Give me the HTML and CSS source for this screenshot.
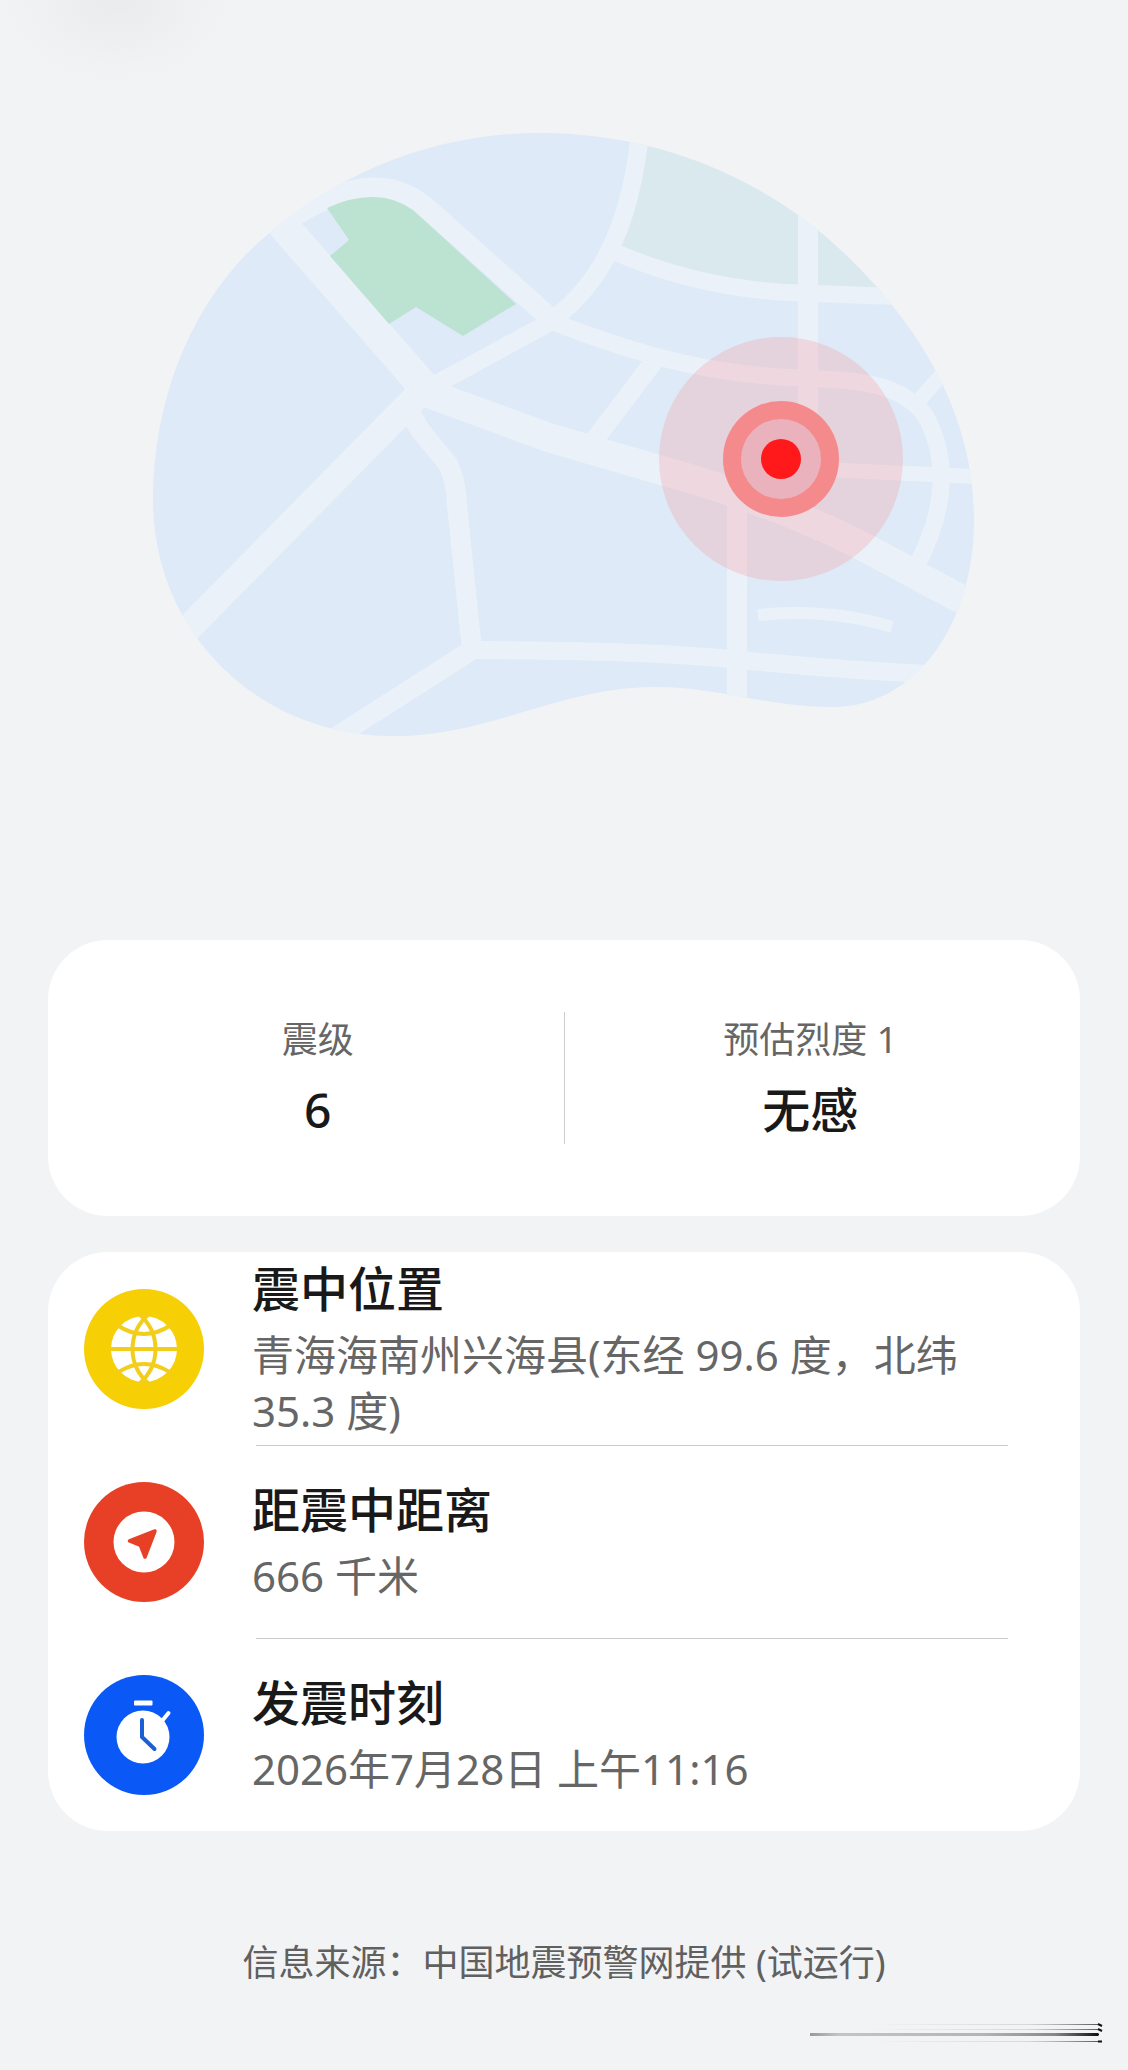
FILE: index.html
```html
<!DOCTYPE html>
<html lang="zh-CN">
<head>
  <meta charset="UTF-8" />
  <meta name="viewport" content="width=device-width, initial-scale=1" />
  <title>地震预警</title>
  <link rel="stylesheet" href="styles.css">
</head>
<body>
  <main class="page">
    <svg class="map" viewBox="153 133 822 603" role="img" aria-label="震中地图">
      <defs>
        <clipPath id="land">
          <path d="M153 500C153 395 195 295 267 235C340 172 435 133 540 133C660 133 770 180 850 259C930 337 974 425 974 520C974 625 915 707 833 707C765 707 720 687 655 687C560 687 490 736 395 736C255 736 153 630 153 500Z" />
        </clipPath>
      </defs>
      <g clip-path="url(#land)">
        <rect x="153" y="133" width="822" height="603" fill="#deeaf7" />
        <path d="M642 120Q640 195 615 250Q700 290 800 293L910 297V120Z" fill="#dae9ee" />
        <!-- roads -->
        <g fill="none" stroke="#eaf1f9">
          <path d="M240 176L425 388" stroke-width="31" />
          <path d="M416 389L550 438L660 470Q770 500 860 545L985 612" stroke-width="29" />
          <path d="M430 383L165 652" stroke-width="27" />
          <path d="M404 402L420 430L448 464Q456 480 457 505L472 650L325 744" stroke-width="20" />
          <path d="M466 650Q650 650 740 660Q850 671 950 675" stroke-width="18" />
          <path d="M737 480V710" stroke-width="20" />
          <path d="M285 222Q335 188 375 188Q405 188 430 211L550 318" stroke-width="21" />
          <path d="M420 393L545 325C590 295 632 240 641 120" stroke-width="18" />
          <path d="M610 250Q700 290 800 293L910 297" stroke-width="17" />
          <path d="M548 320C650 360 720 375 800 378C860 380 900 383 925 415C950 460 945 510 918 563" stroke-width="17" />
          <path d="M915 405L952 363" stroke-width="15" />
          <path d="M790 468L985 477" stroke-width="15" />
          <path d="M808 200V470" stroke-width="20" />
          <path d="M655 360L592 443" stroke-width="19" />
          <path d="M758 615Q830 608 892 627" stroke-width="12" />
        </g>
        <path d="M327 208Q350 197 373 197Q395 197 413 210L516 304L463 336L416 307L389 324L330 256L349 240Z" fill="#bce2d2" />
      </g>
      <!-- epicenter -->
      <circle cx="781" cy="459" r="122" fill="rgba(255,115,117,0.2)" />
      <circle cx="781" cy="459" r="58" fill="#f58a8d" />
      <circle cx="781" cy="459" r="40" fill="#eab2bd" />
      <circle cx="781" cy="459" r="20" fill="#ff191b" />
    </svg>

    <section class="card summary">
      <div class="stat">
        <span class="stat-label">震级</span>
        <strong class="stat-value">6</strong>
      </div>
      <div class="stat">
        <span class="stat-label">预估烈度 1</span>
        <strong class="stat-value">无感</strong>
      </div>
    </section>

    <section class="card details">
      <div class="row">
        <svg class="icon" viewBox="0 0 120 120" aria-hidden="true">
          <circle cx="60" cy="60" r="60" fill="#f6cf05" />
          <circle cx="60" cy="60" r="33" fill="#fff" />
          <g fill="none" stroke="#f3cd1c" stroke-width="4">
            <path d="M26 60H94" />
            <path d="M65 25C43 44 43 76 65 95" />
            <path d="M55 25C77 44 77 76 55 95" />
            <path d="M33 36Q60 54 87 36" />
            <path d="M33 84Q60 66 87 84" />
          </g>
        </svg>
        <div class="info">
          <h2>震中位置</h2>
          <p>青海海南州兴海县(东经 99.6 度，北纬 35.3 度)</p>
        </div>
      </div>
      <div class="row">
        <svg class="icon" viewBox="0 0 120 120" aria-hidden="true">
          <circle cx="60" cy="60" r="60" fill="#e84026" />
          <circle cx="60" cy="60" r="30.5" fill="#fff" />
          <path d="M71 49L45.500 59L56.500 63.500L61 75Z" fill="#e84026" stroke="#e84026" stroke-width="3.500" stroke-linejoin="round" />
        </svg>
        <div class="info">
          <h2>距震中距离</h2>
          <p>666 千米</p>
        </div>
      </div>
      <div class="row">
        <svg class="icon" viewBox="0 0 120 120" aria-hidden="true">
          <circle cx="60" cy="60" r="60" fill="#0a59f7" />
          <circle cx="59" cy="62" r="26.5" fill="#fff" />
          <rect x="50" y="25.5" width="18.500" height="5" rx="1" fill="#fff" />
          <path d="M78 46L84.500 38" fill="none" stroke="#fff" stroke-width="4" stroke-linecap="round" />
          <path d="M58 45V62L70.500 74" fill="none" stroke="#1a5fd6" stroke-width="4" stroke-linecap="round" stroke-linejoin="round" />
        </svg>
        <div class="info">
          <h2>发震时刻</h2>
          <p>2026年7月28日 上午11:16</p>
        </div>
      </div>
    </section>

    <footer class="source">
      <p>信息来源：中国地震预警网提供 (试运行)</p>
      <svg class="streaks" viewBox="0 0 294 30" aria-hidden="true">
        <defs>
          <linearGradient id="main-streak">
            <stop offset="0" stop-color="#999" />
            <stop offset="0.1" stop-color="#c4c4c4" />
            <stop offset="0.6" stop-color="#b4b4b4" />
            <stop offset="0.85" stop-color="#888" />
            <stop offset="1" stop-color="#111" />
          </linearGradient>
          <linearGradient id="thin-streak">
            <stop offset="0.2" stop-color="#999" stop-opacity="0" />
            <stop offset="0.75" stop-color="#999" stop-opacity="0.3" />
            <stop offset="1" stop-color="#555" />
          </linearGradient>
        </defs>
        <rect x="0" y="12" width="288" height="3" fill="url(#main-streak)" />
        <rect x="0" y="3" width="290" height="1" fill="url(#thin-streak)" />
        <rect x="0" y="8" width="290" height="1" fill="url(#thin-streak)" />
        <rect x="0" y="20" width="290" height="1" fill="url(#thin-streak)" />
        <path d="M288 3L292 5M288 8L292 10M287 13.500H289M288 20.500H292" stroke="#111" stroke-width="2" />
      </svg>
    </footer>
  </main>
</body>
</html>
```
FILE: styles.css
```css
* {
  box-sizing: border-box;
}
body {
  margin: 0;
  font-family: "Noto Sans", "Noto Sans CJK SC", sans-serif;
  background: radial-gradient(ellipse 110px 80px at 116px 0, #eaebed, #f2f3f5) no-repeat #f2f3f5;
  color: #191919;
}
h2, p {
  margin: 0;
}
.page {
  display: flex;
  flex-direction: column;
  padding: 133px 48px 20px;
}
.map {
  display: block;
  width: 80%;
  max-width: 822px;
  margin: 0 auto 204px;
}
.card {
  background: #fff;
  border-radius: 60px;
}
.summary {
  display: flex;
  padding: 72px 24px;
  margin-bottom: 36px;
}
.stat {
  flex: 1;
  display: flex;
  flex-direction: column;
  align-items: center;
  gap: 8px;
  text-align: center;
}
.stat + .stat {
  border-left: 1px solid #ccc;
}
.stat-label {
  font-size: 36px;
  line-height: 56px;
  color: #666;
}
.stat-value {
  font-size: 48px;
  line-height: 68px;
  font-weight: 500;
}
.details {
  padding: 0 72px 0 36px;
}
.row {
  display: flex;
  align-items: center;
  gap: 48px;
  min-height: 193px;
  position: relative;
}
/* divider starts slightly right of the text */
.row + .row::before {
  content: "";
  position: absolute;
  top: 0;
  left: 172px;
  right: 0;
  height: 1px;
  background: #ccc;
}
.icon {
  flex: none;
  width: 120px;
  height: 120px;
}
.info {
  flex: 1;
  padding-bottom: 4px;
}
.info h2 {
  font-size: 48px;
  line-height: 68px;
  font-weight: 500;
}
.info p {
  margin-top: 4px;
  font-size: 42px;
  line-height: 56px;
  color: #666;
}
.source {
  display: flex;
  flex-direction: column;
  align-items: center;
  margin-top: 106px;
}
.source p {
  font-size: 36px;
  line-height: 52px;
  color: #606060;
  text-align: center;
}
.streaks {
  align-self: flex-end;
  width: 294px;
  height: 30px;
  margin: 32px -24px 0 0;
}
```
